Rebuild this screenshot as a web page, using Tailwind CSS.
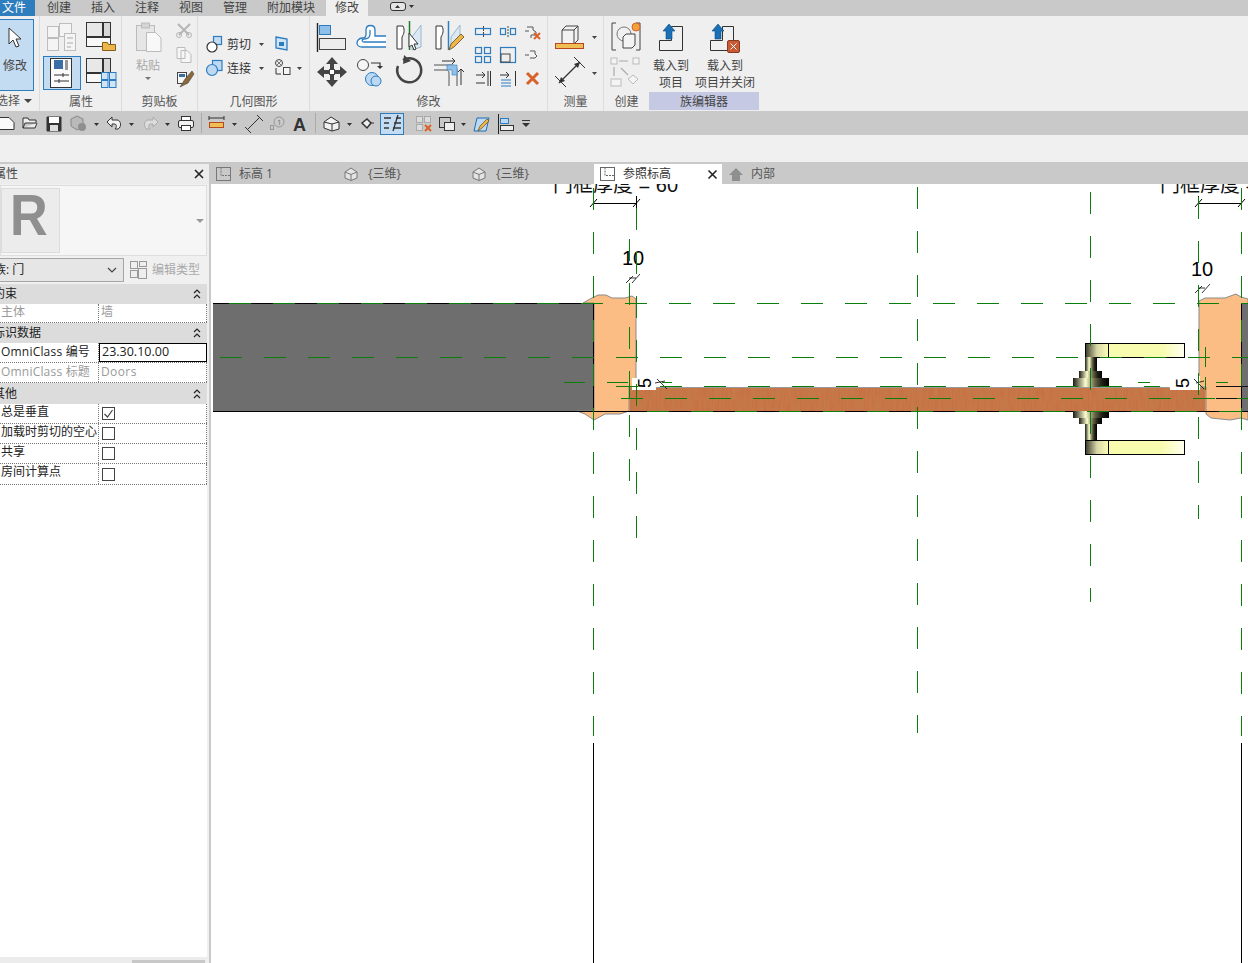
<!DOCTYPE html>
<html lang="zh">
<head>
  <meta charset="UTF-8" />
  <title>Revit 族编辑器</title>
  <script src="https://cdn.jsdelivr.net/npm/@tailwindcss/browser@4"></script>
</head>
<body class="w-[1248px] h-[963px] overflow-hidden bg-[#c9c9c9] text-[#333] text-xs font-['Open_Sans','Noto_Sans_CJK_SC',sans-serif]">

<div class="flex flex-col h-[963px]">
  <!-- Menu tabs -->
  <nav class="h-4 flex items-center leading-4 text-[#444] shrink-0">
    <div class="w-[35px] h-4 bg-[#2e7dbd] text-white pl-0.5">文件</div>
    <div class="flex gap-5 ml-3">
      <span>创建</span><span>插入</span><span>注释</span><span>视图</span><span>管理</span><span>附加模块</span>
    </div>
    <div class="h-4 ml-[11px] px-[9px] bg-[#efefef]">修改</div>
    <svg class="ml-[22px]" width="26" height="16" viewBox="390 0 26 16">
      <rect x="390.500" y="2.500" width="15" height="8" rx="2.500" fill="#e6e6e6" stroke="#333"/>
      <path d="M395 8l2.500-3 2.500 3z" fill="#333"/><path d="M409 5h5l-2.500 3z" fill="#333"/>
    </svg>
  </nav>

  <!-- Ribbon -->
  <div class="h-[95px] flex bg-[#efefef] shrink-0">
    <section class="w-10 flex flex-col border-r border-[#dcdcdc]">
      <svg width="39" height="76" viewBox="0 16 39 76">
        <rect x="-2" y="19.500" width="35.500" height="71" fill="#c4dcf2" stroke="#2d7cc0"/>
        <path d="M9 28v16l4-4 3 7 3-1-3-7h5z" fill="#fff" stroke="#333"/>
        <text x="3" y="70" font-size="12" fill="#444">修改</text>
      </svg>
      <div class="h-[18px] leading-5 flex items-center text-[#555] -ml-1">选择<span class="ml-1 w-0 h-0 border-x-4 border-x-transparent border-t-4 border-t-[#444]"></span></div>
    </section>

    <section class="w-[82px] flex flex-col border-r border-[#dcdcdc]">
      <svg width="81" height="76" viewBox="40 16 81 76">
        <g fill="#f4f4f4" stroke="#bdbdbd">
          <rect x="47.500" y="26.500" width="11" height="11"/><rect x="59.500" y="23.500" width="12" height="13"/>
          <rect x="47.500" y="38.500" width="11" height="12"/><rect x="64.500" y="33.500" width="11" height="17"/>
        </g>
        <path d="M67 38h6M67 43h6M67 47h4" stroke="#aaa"/>
        <rect x="86.500" y="22.500" width="16" height="14" fill="#e8e8e8" stroke="#333"/>
        <rect x="103.500" y="22.500" width="7" height="14" fill="#d8d8d8" stroke="#333"/>
        <rect x="86.500" y="37.500" width="24" height="9" fill="#f8f8f8" stroke="#333"/>
        <path d="M102.500 42.500h5l1 2h7v6h-13z" fill="#edb64a" stroke="#8a5d14"/>
        <rect x="43.500" y="56.500" width="37" height="33" fill="#c4dcf2" stroke="#2d7cc0"/>
        <rect x="50.500" y="58.500" width="21" height="29" fill="#fafafa" stroke="#333"/>
        <rect x="54" y="60" width="9" height="9" fill="#3a6ea5"/><rect x="65" y="60" width="3" height="10" fill="#999"/>
        <path d="M54 75h15M54 81h15M63 73v4M59 79v4" stroke="#333"/>
        <rect x="86.500" y="58.500" width="16" height="14" fill="#e8e8e8" stroke="#333"/>
        <rect x="103.500" y="58.500" width="7" height="14" fill="#d8d8d8" stroke="#333"/>
        <rect x="86.500" y="73.500" width="16" height="9" fill="#f8f8f8" stroke="#333"/>
        <g fill="#cfe4f7" stroke="#2d7cc0"><rect x="101.500" y="72.500" width="6.500" height="7"/><rect x="109.500" y="72.500" width="6.500" height="7"/><rect x="101.500" y="80.500" width="6.500" height="7"/><rect x="109.500" y="80.500" width="6.500" height="7"/></g>
      </svg>
      <div class="h-[18px] leading-5 text-center text-[#555] pl-px">属性</div>
    </section>

    <section class="w-[76px] flex flex-col border-r border-[#dcdcdc]">
      <svg width="75" height="76" viewBox="122 16 75 76">
        <rect x="136.500" y="25.500" width="18" height="25" fill="#e6e6e6" stroke="#bbb"/>
        <rect x="141.500" y="23" width="8" height="5" fill="#d4d4d4" stroke="#bbb"/>
        <path d="M146.500 32.500h9l5.500 5.500v13.500h-14.500z" fill="#f8f8f8" stroke="#bbb"/>
        <text x="136" y="70" font-size="12" fill="#a8a8a8">粘贴</text>
        <path d="M145 77h6l-3 3z" fill="#777"/>
        <path d="M178 24l11 11M190 24l-11 11" stroke="#b5b5b5" stroke-width="2"/>
        <circle cx="179" cy="35" r="2.500" fill="none" stroke="#b5b5b5"/><circle cx="189" cy="35" r="2.500" fill="none" stroke="#b5b5b5"/>
        <path d="M177 47.500h8v11h-8zM181 50.500h6l4 4v8h-10z" fill="#f6f6f6" stroke="#bbb"/>
        <rect x="177.500" y="72.500" width="9" height="11" fill="#f8f8f8" stroke="#444"/><rect x="179" y="74" width="6" height="3" fill="#3a6ea5"/>
        <path d="M192 71l-7 8-5 8 8-4 6-9z" fill="#8a6a3c" stroke="#444" stroke-width=".6"/>
      </svg>
      <div class="h-[18px] leading-5 text-center text-[#555]">剪贴板</div>
    </section>

    <section class="w-28 flex flex-col border-r border-[#dcdcdc]">
      <svg width="111" height="76" viewBox="198 16 111 76">
        <rect x="213.500" y="36.500" width="8" height="8" fill="#c4dcf2" stroke="#2d7cc0" stroke-width="1.200"/>
        <circle cx="212" cy="47" r="5" fill="#fff" stroke="#333" stroke-width="1.200"/>
        <text x="227" y="49" font-size="12" fill="#333">剪切</text><path d="M259 43h5l-2.500 3z" fill="#444"/>
        <path d="M276 37l11 2v11l-11-2z" fill="#cfe4f7" stroke="#2d7cc0" stroke-width="1.300"/><rect x="279" y="42" width="5" height="4" fill="#2d7cc0"/>
        <rect x="212.500" y="60.500" width="9.500" height="10" fill="#bcd8f2" stroke="#2d7cc0" stroke-width="1.200"/>
        <circle cx="212" cy="70" r="5.500" fill="#bcd8f2" stroke="#2d7cc0" stroke-width="1.200"/>
        <text x="227" y="73" font-size="12" fill="#333">连接</text><path d="M259 67h5l-2.500 3z" fill="#444"/>
        <circle cx="279" cy="63" r="3.500" fill="none" stroke="#444"/><path d="M277 61l4 4M281 61l-4 4" stroke="#444" stroke-width=".7"/>
        <rect x="283.500" y="67.500" width="6.500" height="7" fill="#f5f5f5" stroke="#444"/><path d="M276 68v6h5" fill="none" stroke="#333"/>
        <path d="M297 67h5l-2.500 3z" fill="#444"/>
      </svg>
      <div class="h-[18px] leading-5 text-center text-[#555]">几何图形</div>
    </section>

    <section class="w-[238px] flex flex-col border-r border-[#dcdcdc]">
      <svg width="237" height="76" viewBox="310 16 237 76">
        <path d="M317.500 23v29" stroke="#222" stroke-width="1.400"/>
        <rect x="319.500" y="25.500" width="11" height="9" fill="#8fc0ea" stroke="#2d7cc0"/>
        <rect x="319.500" y="38.500" width="26" height="11" fill="#ececec" stroke="#444"/>
        <path d="M386 36H375V30c0-6-9-6-9 0v5c0 2-2 3-4 3-3 0-5 3-5 5s2 4 5 4H386" fill="#fff" stroke="#2d7cc0" stroke-width="1.300"/>
        <path d="M386 42H364c-2 0-3-3 0-3 4 0 6-2 6-5v-4" fill="none" stroke="#2d7cc0" stroke-width="1.300"/>
        <path d="M397 26h6c2 4 1 8-1 11v12h-5z" fill="#fff" stroke="#333"/>
        <path d="M409.500 21v29" stroke="#1f7a2a" stroke-width="1.500"/>
        <path d="M412 37l9-12v22l-9 3z" fill="#dbe9f3" stroke="#9ab7cf"/>
        <path d="M409 33v14l3-2 2 5 2-1-2-5h4z" fill="#fff" stroke="#333"/>
        <path d="M436 26h6c2 4 1 8-1 11v12h-5z" fill="#fff" stroke="#333"/>
        <path d="M448.500 21v29" stroke="#2d7cc0" stroke-width="1.500"/>
        <path d="M451 37l9-12v14l-9 8z" fill="#dbe9f3" stroke="#9ab7cf"/>
        <path d="M449 50l2-6 10-10 3 3-10 10z" fill="#edb64a" stroke="#6a4a14" stroke-width=".8"/>
        <g fill="#444">
          <path d="M332 57l6 7h-4v5h-4v-5h-4zM332 87l6-7h-4v-5h-4v5h-4zM317 72l7-6v4h5v4h-5v4zM347 72l-7-6v4h-5v4h5v4z"/>
        </g>
        <rect x="329.500" y="69.500" width="5" height="5" fill="#fff" stroke="#444"/>
        <circle cx="363" cy="65" r="5.500" fill="#f6f6f6" stroke="#444"/>
        <circle cx="372" cy="79" r="6.500" fill="#bcd8f2" stroke="#2d7cc0"/><circle cx="376" cy="81" r="5" fill="#bcd8f2" stroke="#2d7cc0"/>
        <path d="M371 63h9v4" fill="none" stroke="#333" stroke-width="1.200"/><path d="M377 66h6l-3 3z" fill="#333"/>
        <path d="M403 60a12 12 0 1 1-5 6" fill="none" stroke="#444" stroke-width="2.500"/><path d="M404 55l7 6-8 3z" fill="#444"/>
        <path d="M434 65h18c3 0 5 2 5 5v16M434 70h12c2 0 3 1 3 3v13" fill="none" stroke="#555"/>
        <path d="M447 65h10v10h-5v-5h-5z" fill="#8fc0ea" stroke="#2d7cc0" stroke-width=".6"/>
        <path d="M442 61h13M452 58l3 3-3 3M461 85V69M458 72l3-3 3 3" fill="none" stroke="#333"/>
        <g fill="none" stroke="#2d7cc0" stroke-width="1.200">
          <rect x="475.500" y="28.500" width="15" height="6"/><rect x="500.500" y="28.500" width="5" height="6"/><rect x="510.500" y="28.500" width="5" height="6"/>
          <rect x="475.500" y="47.500" width="6" height="6"/><rect x="484.500" y="47.500" width="6" height="6"/><rect x="475.500" y="56.500" width="6" height="6"/><rect x="484.500" y="56.500" width="6" height="6"/>
          <rect x="500.500" y="47.500" width="15" height="15"/>
        </g>
        <path d="M483.500 26v11M508 26v11" stroke="#444" stroke-dasharray="2 1"/>
        <rect x="501" y="54" width="9" height="8" fill="#eee" stroke="#444"/>
        <path d="M527 27h6v3l3 2v3h-5v3M525 31h4" fill="#f2f2f2" stroke="#555"/>
        <path d="M534 33l6 6M540 33l-6 6" stroke="#d9622b" stroke-width="2"/>
        <path d="M530 51h5v3l2 2-2 2h-5M525 55h4" fill="#f2f2f2" stroke="#555"/>
        <path d="M476 75h9M482 72l3 3-3 3M476 83h9M490.500 71v15M488 71v15" fill="none" stroke="#333"/>
        <path d="M500 75h9M506 72l3 3-3 3" fill="none" stroke="#333"/><path d="M501 80h10M501 83h10M501 86h10" stroke="#2d7cc0"/><path d="M515.500 71v15" stroke="#333"/>
        <path d="M527 73l11 11M538 73l-11 11" stroke="#d9622b" stroke-width="3"/>
      </svg>
      <div class="h-[18px] leading-5 text-center text-[#555]">修改</div>
    </section>

    <section class="w-14 flex flex-col border-r border-[#dcdcdc]">
      <svg width="55" height="76" viewBox="548 16 55 76">
        <path d="M562 30l4-4h12v14l-4 4h-12z" fill="#f2f2f2" stroke="#444"/><path d="M562 30h12v14M574 30l4-4" fill="none" stroke="#444"/>
        <rect x="555.500" y="43.500" width="28" height="5" fill="#efbe55" stroke="#b5481f"/>
        <path d="M592 36h5l-2.500 3z" fill="#444"/>
        <path d="M559 83l21-21" stroke="#333" stroke-width="1.200"/><path d="M555 76l11 11M574 57l11 11" stroke="#333"/>
        <path d="M559 83l2-6 4 4zM580 62l-6 2 4 4z" fill="#333"/>
        <path d="M592 72h5l-2.500 3z" fill="#444"/>
      </svg>
      <div class="h-[18px] leading-5 text-center text-[#555]">测量</div>
    </section>

    <section class="w-[45px] flex flex-col">
      <svg width="45" height="76" viewBox="604 16 45 76">
        <path d="M616 23h-4v27h4M636 23h4v27h-4" fill="none" stroke="#444"/>
        <circle cx="624" cy="34" r="7" fill="#f0f0f0" stroke="#777"/>
        <path d="M623 37l3-3h9v11l-3 3h-9z" fill="#f4f4f4" stroke="#444"/>
        <circle cx="636" cy="27" r="4" fill="#f2a23a" stroke="#d9622b"/>
        <g fill="#f4f4f4" stroke="#bbb"><rect x="611" y="58" width="6" height="6"/><rect x="633" y="58" width="6" height="6"/><rect x="611" y="79" width="10" height="7"/><path d="M633 75l5 4-5 5-5-5z"/></g>
        <path d="M619 61h9M614 67v9M621 68l7 7" stroke="#aaa" stroke-width="1.200"/>
      </svg>
      <div class="h-[18px] leading-5 text-center text-[#555]">创建</div>
    </section>

    <section class="w-[110px] flex flex-col">
      <svg width="110" height="76" viewBox="649 16 110 76">
        <path d="M659.500 40.500h12v-14h11v24h-23z" fill="#f0f0f0" stroke="#333"/>
        <path d="M669 24l6 7h-3v8h-6v-8h-3z" fill="#1a6fb5" stroke="#0d4a82" stroke-width=".6"/>
        <text x="653" y="70" font-size="12" fill="#444">载入到</text>
        <text x="659" y="87" font-size="12" fill="#444">项目</text>
        <path d="M710.500 40.500h12v-14h11v24h-23z" fill="#f0f0f0" stroke="#333"/>
        <path d="M718 24l6 7h-3v8h-6v-8h-3z" fill="#1a6fb5" stroke="#0d4a82" stroke-width=".6"/>
        <rect x="727.500" y="40.500" width="12" height="12" rx="1.500" fill="#c85a34" stroke="#8a3a1f"/>
        <path d="M730.500 43.500l6 6M736.500 43.500l-6 6" stroke="#fff"/>
        <text x="707" y="70" font-size="12" fill="#444">载入到</text>
        <text x="695" y="87" font-size="12" fill="#444">项目并关闭</text>
      </svg>
      <div class="h-[18px] leading-5 text-center text-[#444] bg-[#c6c9e3]">族编辑器</div>
    </section>
  </div>

  <!-- Quick access toolbar -->
  <div class="h-6 flex items-center shrink-0">
    <svg width="540" height="24" viewBox="0 111 540 24">
      <path d="M-2 117.500h11l5 5v7h-16z" fill="#fafafa" stroke="#333"/>
      <path d="M23 128v-10h5l1 2h7v3h-11l-2 5h12l2-5" fill="#eee" stroke="#333"/>
      <rect x="46.500" y="116.500" width="15" height="15" rx="1" fill="#333"/><rect x="49" y="117" width="10" height="6" fill="#fff"/><rect x="50" y="125" width="8" height="6" fill="#ddd"/>
      <path d="M71 119l6-3 6 3v7l-6 4-6-4z" fill="#b9b9b9" stroke="#888"/><circle cx="82" cy="127" r="4" fill="#8f8f8f"/>
      <path d="M94 123h5l-2.500 3z" fill="#333"/>
      <path d="M107 122l5-5v3h5c4 0 5 7 1 9h-3c2-2 2-5-1-5h-2v3z" fill="#f3f3f3" stroke="#333"/>
      <path d="M129 123h5l-2.500 3z" fill="#333"/>
      <path d="M158 122l-5-5v3h-5c-4 0-5 7-1 9h3c-2-2-2-5 1-5h2v3z" fill="#ddd" stroke="#aaa"/>
      <path d="M165 123h5l-2.500 3z" fill="#333"/>
      <rect x="181.500" y="116.500" width="9" height="5" fill="#fff" stroke="#333"/><rect x="178.500" y="120.500" width="15" height="7" rx="1.500" fill="#f0f0f0" stroke="#333"/><rect x="181.500" y="125.500" width="9" height="5" fill="#fff" stroke="#333"/>
      <path d="M201.500 113v20" stroke="#aaa"/>
      <path d="M209 118h15M209 116v4M224 116v4" stroke="#333"/><rect x="209.500" y="122.500" width="14" height="5" fill="#efbe55" stroke="#b5481f"/>
      <path d="M232 123h5l-2.500 3z" fill="#333"/>
      <path d="M247 130l13-13M245 127l6 6M257 115l6 6" stroke="#333"/>
      <rect x="270.500" y="125.500" width="3" height="4" fill="none" stroke="#999"/><circle cx="279" cy="122" r="5" fill="none" stroke="#999"/><text x="277" y="125" font-size="8" fill="#777">1</text>
      <text x="293" y="131" font-size="18" font-weight="700" fill="#333" font-family="Liberation Sans">A</text>
      <path d="M315.500 113v20" stroke="#aaa"/>
      <path d="M324 122l7-5 8 5v7l-7 2-8-3z" fill="#f2f2f2" stroke="#333"/><path d="M324 122l8 2 7-2M332 124v7" fill="none" stroke="#333"/>
      <path d="M347 123h5l-2.500 3z" fill="#333"/>
      <path d="M362 123l5-4 4 4-4 5z" fill="#eee" stroke="#333" stroke-width="1.500"/><path d="M370 123h4" stroke="#333"/>
      <rect x="380.500" y="113.500" width="23" height="21" fill="#c4dcf2" stroke="#2d7cc0"/>
      <path d="M384 118h7M384 123h5M384 128h5M396 118h5M394 123h7M393 128h8M393 131l5-16" stroke="#333" stroke-width="1.300"/>
      <g fill="#ddd" stroke="#aaa"><rect x="416.500" y="116.500" width="6" height="6"/><rect x="424.500" y="116.500" width="6" height="6"/><rect x="416.500" y="124.500" width="6" height="6"/></g>
      <path d="M425 125l6 6M431 125l-6 6" stroke="#d9622b" stroke-width="2"/>
      <rect x="439.500" y="117.500" width="11" height="10" fill="none" stroke="#333"/><rect x="444.500" y="122.500" width="10" height="8" fill="#eee" stroke="#333"/>
      <path d="M461 123h5l-2.500 3z" fill="#333"/>
      <path d="M477 118h12l-3 13h-12z" fill="#bcd8f2" stroke="#1a6fb5"/><path d="M478 131l2-5 7-7 2 2-7 7z" fill="#edb64a" stroke="#6a4a14" stroke-width=".7"/>
      <path d="M498.500 114v20" stroke="#222"/><rect x="500.500" y="118.500" width="8" height="5" fill="#bcd8f2" stroke="#2d7cc0"/><rect x="500.500" y="125.500" width="13" height="5" fill="#eee" stroke="#333"/>
      <path d="M522 120h8v1h-8zM522 123h8l-4 4z" fill="#333"/>
    </svg>
  </div>

  <!-- Empty options bar -->
  <div class="h-[27px] bg-[#f0f0f0] shrink-0"></div>

  <!-- Main area -->
  <div class="flex-1 flex min-h-0 pt-0.5">
    <!-- Properties panel -->
    <aside class="w-[211px] shrink-0 bg-[#f0f0f0] border-r-2 border-[#c9c9c9] flex flex-col overflow-hidden">
      <div class="h-5 flex items-center justify-between bg-[#ececec] pr-1 text-[#444] shrink-0">
        <span class="-ml-[6px]">属性</span>
        <svg width="12" height="12" viewBox="0 0 12 12"><path d="M2 2l8 8M10 2l-8 8" stroke="#222" stroke-width="1.600"/></svg>
      </div>
      <div class="mt-px h-[71px] w-[207px] bg-[#f6f6f6] border border-[#dedede] flex items-center justify-between pr-0.5 shrink-0">
        <div class="w-[59px] h-[65px] bg-[#ececec] border border-[#dcdcdc] flex items-center justify-center overflow-hidden">
          <span class="text-[58px] leading-none font-bold text-[#8f8f8f] font-['Liberation_Sans',sans-serif] -mt-3 -ml-1 scale-x-90">R</span>
        </div>
        <span class="w-0 h-0 border-x-4 border-x-transparent border-t-4 border-t-[#999]"></span>
      </div>
      <div class="h-7 w-[207px] flex items-center shrink-0">
        <div class="w-[124px] h-6 bg-[#e6e6e6] border border-[#a6a6a6] border-l-0 flex items-center justify-between pr-1.5 overflow-hidden">
          <span class="-ml-[6px] text-[#222]">族: 门</span>
          <svg width="10" height="6" viewBox="0 0 10 6"><path d="M1 1l4 4 4-4" fill="none" stroke="#444" stroke-width="1.200"/></svg>
        </div>
        <svg class="ml-1.5" width="18" height="18" viewBox="0 0 18 18" fill="#eee" stroke="#999"><rect x=".5" y=".5" width="7" height="7"/><rect x="9.500" y=".5" width="7" height="5"/><rect x=".5" y="9.500" width="7" height="7"/><rect x="8.500" y="7.500" width="8" height="10"/></svg>
        <span class="ml-1 text-[#a9a9a9]">编辑类型</span>
      </div>

      <div class="w-[207px] shrink-0 bg-white text-[#222]">
        <div class="h-5 bg-[#dcdcdc] flex items-center justify-between pr-1.5"><span class="-ml-[7px]">约束</span>
          <svg width="8" height="10" viewBox="0 0 8 10" fill="none" stroke="#222" stroke-width="1.200"><path d="M1 4l3-3 3 3M1 9l3-3 3 3"/></svg></div>
        <div class="h-[19px] flex border-b border-dotted border-[#777] text-[#9a9a9a]">
          <div class="w-[99px] pl-px border-r border-dotted border-[#777]">主体</div>
          <div class="flex-1 pl-0.5 border-r border-dotted border-[#777]">墙</div>
        </div>
        <div class="h-5 bg-[#dcdcdc] flex items-center justify-between pr-1.5"><span class="-ml-[7px]">标识数据</span>
          <svg width="8" height="10" viewBox="0 0 8 10" fill="none" stroke="#222" stroke-width="1.200"><path d="M1 4l3-3 3 3M1 9l3-3 3 3"/></svg></div>
        <div class="h-5 flex border-b border-dotted border-[#777]">
          <div class="w-[99px] pl-px border-r border-dotted border-[#777] whitespace-nowrap tracking-[0.2px] leading-[18px]">OmniClass 编号</div>
          <div class="flex-1 pl-0.5 border border-black leading-4 text-[12.5px]">23.30.10.00</div>
        </div>
        <div class="h-5 flex border-b border-dotted border-[#777] text-[#9a9a9a]">
          <div class="w-[99px] pl-px border-r border-dotted border-[#777] whitespace-nowrap tracking-[0.2px] leading-[18px]">OmniClass 标题</div>
          <div class="flex-1 pl-0.5 border-r border-dotted border-[#777] tracking-[0.4px] leading-[18px]">Doors</div>
        </div>
        <div class="h-[21px] bg-[#dcdcdc] flex items-center justify-between pr-1.5"><span class="-ml-[7px]">其他</span>
          <svg width="8" height="10" viewBox="0 0 8 10" fill="none" stroke="#222" stroke-width="1.200"><path d="M1 4l3-3 3 3M1 9l3-3 3 3"/></svg></div>
        <div class="h-5 flex border-b border-dotted border-[#777]">
          <div class="w-[99px] pl-px border-r border-dotted border-[#777] whitespace-nowrap">总是垂直</div>
          <div class="flex-1 pl-[3px] flex items-center border-r border-dotted border-[#777]"><span class="w-[13px] h-[13px] border border-[#444] flex items-center justify-center"><svg width="11" height="11" viewBox="0 0 11 11"><path d="M1.500 6l3 3 5-7" fill="none" stroke="#444" stroke-width="1.200"/></svg></span></div>
        </div>
        <div class="h-5 flex border-b border-dotted border-[#777]">
          <div class="w-[99px] pl-px border-r border-dotted border-[#777] whitespace-nowrap overflow-hidden">加载时剪切的空心</div>
          <div class="flex-1 pl-[3px] flex items-center border-r border-dotted border-[#777]"><span class="w-[13px] h-[13px] border border-[#444]"></span></div>
        </div>
        <div class="h-5 flex border-b border-dotted border-[#777]">
          <div class="w-[99px] pl-px border-r border-dotted border-[#777]">共享</div>
          <div class="flex-1 pl-[3px] flex items-center border-r border-dotted border-[#777]"><span class="w-[13px] h-[13px] border border-[#444]"></span></div>
        </div>
        <div class="h-[21px] flex border-b border-dotted border-[#777]">
          <div class="w-[99px] pl-px border-r border-dotted border-[#777]">房间计算点</div>
          <div class="flex-1 pl-[3px] flex items-center border-r border-dotted border-[#777]"><span class="w-[13px] h-[13px] border border-[#444]"></span></div>
        </div>
      </div>
      <div class="flex-1 w-[207px] bg-white"></div>
      <div class="h-1.5 w-[207px] bg-[#ececec] flex justify-end pr-0.5 shrink-0"><div class="w-[73px] h-[3px] mt-[3px] bg-[#c8c8c8]"></div></div>
    </aside>

    <div class="flex-1 flex flex-col min-w-0 bg-white">
      <!-- View tabs -->
      <div class="h-5 bg-[#c9c9c9] flex text-[#555] shrink-0">
        <div class="w-[128px] flex items-center pl-[5px] gap-2">
          <svg width="15" height="14" viewBox="0 0 15 14" fill="none" stroke="#777"><rect x=".5" y=".5" width="14" height="13"/><path d="M5 .5v8h9" stroke-dasharray="2 1"/></svg><span>标高 1</span>
        </div>
        <div class="w-[128px] flex items-center pl-[5px] gap-2.5">
          <svg width="14" height="14" viewBox="0 0 14 14" fill="#e4e4e4" stroke="#777"><path d="M1 5l6-4 6 4v6l-6 2.500-6-2.500z"/><path d="M1 5l6 2.500 6-2.500M7 7.500v6"/></svg><span>{三维}</span>
        </div>
        <div class="w-[127px] flex items-center pl-[5px] gap-2.5">
          <svg width="14" height="14" viewBox="0 0 14 14" fill="#e4e4e4" stroke="#777"><path d="M1 5l6-4 6 4v6l-6 2.500-6-2.500z"/><path d="M1 5l6 2.500 6-2.500M7 7.500v6"/></svg><span>{三维}</span>
        </div>
        <div class="w-[128px] bg-white flex items-center pl-1.5 text-[#333]">
          <svg width="15" height="14" viewBox="0 0 15 14" fill="none" stroke="#666"><rect x=".5" y=".5" width="14" height="13"/><path d="M5 .5v8h9" stroke-dasharray="2 1"/></svg>
          <span class="ml-2">参照标高</span>
          <svg class="ml-[36px]" width="11" height="11" viewBox="0 0 11 11"><path d="M1.500 1.500l8 8M9.500 1.500l-8 8" stroke="#222" stroke-width="1.600"/></svg>
        </div>
        <div class="flex items-center pl-[7px] gap-2">
          <svg width="14" height="13" viewBox="0 0 14 13" fill="#8f8f8f"><path d="M7 0l7 7h-3v6H3V7H0z"/></svg><span>内部</span>
        </div>
      </div>

      <!-- Drawing canvas -->
      <svg class="block" width="1037" height="779" viewBox="211 184 1037 779" font-family="Liberation Sans, Noto Sans CJK SC, sans-serif">
        <defs>
          <filter id="wood" x="0" y="0" width="100%" height="100%">
            <feTurbulence type="fractalNoise" baseFrequency="0.5 0.06" numOctaves="2" seed="4"/>
            <feColorMatrix values="0 0 0 0 .55  0 0 0 0 .22  0 0 0 0 .08  1.100 0 0 0 -.2"/>
            <feComposite in2="SourceGraphic" operator="over"/>
          </filter>
          <linearGradient id="grip"><stop offset="0" stop-color="#3a3a2a"/><stop offset=".5" stop-color="#d8d8a8"/><stop offset="1" stop-color="#fdfdb4"/></linearGradient>
          <linearGradient id="lever"><stop offset="0" stop-color="#f8fcae"/><stop offset=".7" stop-color="#f8fcae"/><stop offset="1" stop-color="#fffff0"/></linearGradient>
          <linearGradient id="stem"><stop offset="0" stop-color="#1c1c14"/><stop offset=".35" stop-color="#fdfdd0"/><stop offset=".6" stop-color="#6a6a4a"/><stop offset=".8" stop-color="#222218"/><stop offset="1" stop-color="#000"/></linearGradient>
        </defs>

        <!-- clipped dimension labels -->
        <text x="553" y="192" font-size="20" fill="#111">门框厚度 = 60</text>
        <text x="1160" y="192" font-size="20" fill="#111">门框厚度 = 60</text>

        <!-- wall, frames, door leaf -->
        <rect x="213" y="303" width="381" height="108" fill="#6e6e6e"/>
        <path d="M583 303l7-4 8-4h8l6 3h13l7-2 4 3v88h-7v24l-9 3h-15l-11 6-9-6-8-3h17V303z" fill="#fcbd84" stroke="#8a8a8a"/>
        <path d="M1199 387v-86l6-3h20l11-4 5 3 7 2v121l-7-2-11 2-19-2-5-4v-27z" fill="#fcbd84" stroke="#8a8a8a"/>
        <rect x="1241" y="303" width="7" height="108" fill="#6e6e6e"/>
        <rect x="629.500" y="387.500" width="576" height="24" fill="#c76f42" filter="url(#wood)"/>
        <path d="M636 387.500h533M1199 387.500h7" stroke="#999"/>

        <!-- black edges -->
        <path d="M213 303.500h381M1241 303.500h7M213 411.500h1035M593.500 303v108M1241.500 303v108" stroke="#000" shape-rendering="crispEdges"/>
        <path d="M1216 386.500h32M1216 398.500h32" stroke="#111" shape-rendering="crispEdges"/>
        <path d="M593.500 743v220M1241.500 743v220" stroke="#000" stroke-width="1.200" shape-rendering="crispEdges"/>

        <!-- door handle -->
        <g stroke="#000">
          <rect x="1085.500" y="343.500" width="23" height="14" fill="url(#grip)"/>
          <rect x="1108.500" y="343.500" width="76" height="14" fill="url(#lever)"/>
          <rect x="1085.500" y="440.500" width="23" height="14" fill="url(#grip)"/>
          <rect x="1108.500" y="440.500" width="76" height="14" fill="url(#lever)"/>
          <rect x="1085" y="357" width="12" height="14" fill="url(#stem)" stroke="none"/>
          <rect x="1079" y="371" width="23" height="7" fill="url(#stem)" stroke="none"/>
          <rect x="1073" y="378" width="36" height="9" fill="url(#stem)" stroke="none"/>
          <rect x="1073" y="411" width="36" height="7" fill="url(#stem)" stroke="none"/>
          <rect x="1079" y="418" width="23" height="6" fill="url(#stem)" stroke="none"/>
          <rect x="1085" y="424" width="12" height="16" fill="url(#stem)" stroke="none"/>
        </g>

        <!-- dimensions -->
        <path d="M593.500 196v12M636.500 196v12M590 207l7-8M633 207l7-8M593 203.500h43M1198.500 196v12M1241.500 196v12M1195 207l7-8M1238 207l7-8M1198 203.500h43" stroke="#000" fill="none"/>
        <text x="633" y="265" font-size="20" text-anchor="middle" fill="#000">10</text>
        <text x="1202" y="275.500" font-size="20" text-anchor="middle" fill="#000">10</text>
        <path d="M626 283l7-7M632 283l8-9M629 278h7M1195 293l7-7M1202 293l8-9M1198 288h7" stroke="#000" fill="none" stroke-width=".8"/>
        <rect x="632" y="378" width="24" height="12" fill="#fff"/>
        <rect x="1170" y="376" width="30" height="14" fill="#fff"/>
        <text transform="translate(651 388) rotate(-90)" font-size="18" fill="#000">5</text>
        <text transform="translate(1189 388) rotate(-90)" font-size="18" fill="#000">5</text>
        <path d="M657 379l10 10M655 383l10-2M1194 379l10 10M1196 383l8-2" stroke="#000" fill="none" stroke-width=".8"/>

        <!-- green reference planes -->
        <g stroke="#0a7d0a" fill="none" stroke-dasharray="22 22" shape-rendering="crispEdges">
          <path d="M593.500 188V736"/>
          <path d="M1241.500 188V736"/>
          <path d="M917.500 187V733"/>
          <path d="M1090.500 192V602"/>
          <path d="M636.500 208V540"/>
          <path d="M629.500 239V500"/>
          <path d="M1198.500 197V519"/>
          <path d="M229 303.500H1248"/>
          <path d="M220 357.500H1248"/>
          <path d="M616 386.500H1160"/>
          <path d="M621 398.500H1248"/>
          <path d="M647 411.500H1248"/>
        </g>
        <path d="M564 382.500h21M607 382.500h21M662 382.500h10M1138 382.500h12M1216 382.500h12M636.500 296v12M629.500 377v22M1205.500 347v20M1205.500 377v13" stroke="#0a7d0a" shape-rendering="crispEdges"/>
      </svg>
    </div>
  </div>
</div>

</body>
</html>
